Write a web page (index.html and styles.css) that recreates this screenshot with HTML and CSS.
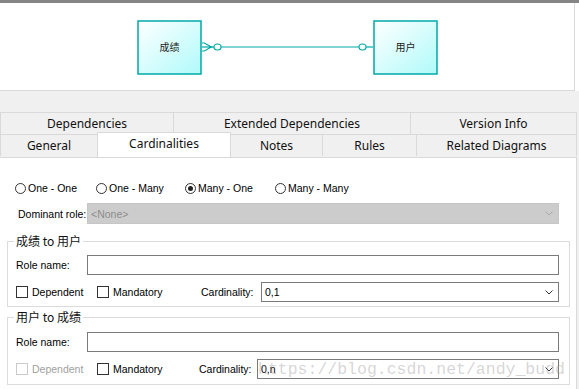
FILE: index.html
```html
<!DOCTYPE html>
<html lang="zh-CN">
<head>
    <meta charset="UTF-8">
    <title>Reference Properties</title>
    <link rel="stylesheet" href="styles.css">
</head>
<body>
    <!-- Diagram preview -->
    <div class="diagram-wrap">
        <div class="diagram">
            <svg width="574" height="87" viewBox="0 0 574 87">
                <defs>
                    <linearGradient id="entityFill" x1="0" y1="0" x2="1" y2="1">
                        <stop offset="0" stop-color="#ffffff"/>
                        <stop offset="1" stop-color="#b0fafa"/>
                    </linearGradient>
                </defs>
                <g fill="none" stroke="#00a9a9" stroke-width="1.2">
                    <line x1="221" y1="44" x2="359" y2="44"/>
                    <line x1="366" y1="44" x2="373" y2="44"/>
                    <polyline points="202,40 204.5,40 211,44 204.5,48 202,48"/>
                    <line x1="202" y1="44" x2="214" y2="44"/>
                    <ellipse cx="217.5" cy="44" rx="3.5" ry="3"/>
                    <ellipse cx="362.5" cy="44" rx="3.5" ry="3"/>
                </g>
                <path d="M209 42.6 L213 44 L209 45.4 Z" fill="#00a9a9"/>
                <rect class="entity" x="138" y="18" width="63" height="53"/>
                <rect class="entity" x="374" y="18" width="63" height="53"/>
                <text class="entity-name" x="169.5" y="47.5">成绩</text>
                <text class="entity-name" x="405.5" y="47.5">用户</text>
            </svg>
        </div>
    </div>

    <!-- Tabs -->
    <div class="tabs">
        <div class="tab-row">
            <div class="tab w-dep">Dependencies</div>
            <div class="tab w-ext">Extended Dependencies</div>
            <div class="tab w-ver">Version Info</div>
        </div>
        <div class="tab-row">
            <div class="tab w-gen">General</div>
            <div class="tab active w-card">Cardinalities</div>
            <div class="tab w-notes">Notes</div>
            <div class="tab w-rules">Rules</div>
            <div class="tab w-rel">Related Diagrams</div>
        </div>
    </div>

    <!-- Cardinalities page -->
    <div class="panel">
        <div class="choice-row">
            <label class="choice w1"><span class="radio"></span>One - One</label>
            <label class="choice w2"><span class="radio"></span>One - Many</label>
            <label class="choice w3"><span class="radio on"></span>Many - One</label>
            <label class="choice"><span class="radio"></span>Many - Many</label>
        </div>

        <div class="dominant-row">
            <span class="dominant-label">Dominant role:</span>
            <div class="select disabled">
                <span>&lt;None&gt;</span>
                <svg class="chev" width="8" height="5" viewBox="0 0 8 5"><polyline points="0.5,0.5 4,4 7.5,0.5"/></svg>
            </div>
        </div>

        <fieldset class="group">
            <legend>成绩 to 用户</legend>
            <div class="role-row">
                <span class="role-label">Role name:</span>
                <div class="text-input"></div>
            </div>
            <div class="check-row">
                <label class="check dep"><span class="box"></span>Dependent</label>
                <label class="check mand"><span class="box"></span>Mandatory</label>
                <span class="card-label">Cardinality:</span>
                <div class="select">
                    <span>0,1</span>
                    <svg class="chev" width="8" height="5" viewBox="0 0 8 5"><polyline points="0.5,0.5 4,4 7.5,0.5"/></svg>
                </div>
            </div>
        </fieldset>

        <fieldset class="group second">
            <legend>用户 to 成绩</legend>
            <div class="role-row">
                <span class="role-label">Role name:</span>
                <div class="text-input"></div>
            </div>
            <div class="check-row">
                <label class="check dep off"><span class="box"></span>Dependent</label>
                <label class="check mand"><span class="box"></span>Mandatory</label>
                <span class="card-label">Cardinality:</span>
                <div class="select">
                    <span>0,n</span>
                    <svg class="chev" width="8" height="5" viewBox="0 0 8 5"><polyline points="0.5,0.5 4,4 7.5,0.5"/></svg>
                </div>
            </div>
        </fieldset>

        <div class="watermark">https://blog.csdn.net/andy_budd</div>
    </div>
</body>
</html>
```

FILE: styles.css
```css
body { margin: 0; width: 579px; height: 389px; overflow: hidden; background: #f0f0f0; font-family: "Liberation Sans", Arial, sans-serif; font-size: 10.5px; color: #000; }

/* --- Diagram preview --- */
.diagram-wrap { background: #fff; border-top: 3px solid #858585; }
.diagram { width: 574px; height: 87px; border-right: 1px solid #dadada; border-bottom: 1px solid #dadada; }
.diagram svg { display: block; }
.entity { fill: url(#entityFill); stroke: #00a9a9; stroke-width: 1.5; }
.entity-name { font-family: "Noto Sans CJK SC", sans-serif; font-size: 10px; fill: #222; text-anchor: middle; }

/* --- Tabs --- */
.tabs { margin-top: 21px; font-family: "Noto Sans", "Noto Sans CJK SC", sans-serif; font-size: 12px; color: #111; }
.tab-row { display: flex; align-items: flex-start; }
.tab { box-sizing: border-box; height: 22px; line-height: 21px; text-align: center; background: #f0f0f0; border-top: 1px solid #d9d9d9; border-left: 1px solid #d9d9d9; }
.tab:last-child { border-right: 1px solid #d9d9d9; }
.tab.active { position: relative; z-index: 1; height: 25px; margin-top: -2px; background: #fff; border-right: 1px solid #d9d9d9; }
.tab.active + .tab { border-left: none; }
.w-dep { width: 173px; }
.w-ext { width: 237px; }
.w-ver { width: 167px; }
.w-gen { width: 97px; }
.w-card { width: 134px; }
.w-notes { width: 91px; }
.w-rules { width: 94px; }
.w-rel { width: 161px; }

/* --- Page body --- */
.panel { position: relative; box-sizing: border-box; width: 577px; height: 233px; background: #fff; border-top: 1px solid #d9d9d9; border-right: 1px solid #d9d9d9; }

.choice-row { display: flex; align-items: center; height: 14px; margin-top: 23px; padding-left: 15px; }
.choice { display: flex; align-items: center; white-space: nowrap; }
.choice.w1 { width: 81px; }
.choice.w2 { width: 89px; }
.choice.w3 { width: 90px; }
.radio { display: flex; align-items: center; justify-content: center; box-sizing: border-box; width: 11px; height: 11px; margin-right: 2px; border: 1px solid #333; border-radius: 50%; background: #fff; }
.radio.on::after { content: ""; width: 5px; height: 5px; border-radius: 50%; background: #222; }

.dominant-row { display: flex; align-items: center; height: 21px; margin-top: 8px; padding: 0 17px 0 18px; }
.dominant-label, .role-label, .card-label { flex-shrink: 0; white-space: nowrap; }
.dominant-label { width: 69px; }

.select { flex: 1; display: flex; align-items: center; justify-content: space-between; box-sizing: border-box; height: 20px; padding: 0 5px 0 3px; border: 1px solid #7a7a7a; background: #fff; }
.select.disabled { height: 21px; background: #cccccc; border-color: #c6c6c6; color: #8c8c8c; }
.chev polyline { fill: none; stroke: #333; stroke-width: 1; }
.select.disabled .chev polyline { stroke: #a8a8a8; }

.group { box-sizing: border-box; width: 563px; margin: 10px 0 0 7px; padding: 7px 10px 4px 8px; border: 1px solid #dcdcdc; min-width: 0; }
.group.second { margin-top: 3px; padding-top: 8px; padding-bottom: 5px; }
.group legend { margin-left: -2px; padding: 0 2px; font-family: "Noto Sans CJK SC", sans-serif; font-size: 12px; line-height: 14px; color: #111; }

.role-row { display: flex; align-items: center; height: 20px; }
.role-label { width: 71px; }
.text-input { flex: 1; box-sizing: border-box; height: 20px; border: 1px solid #7a7a7a; background: #fff; }

.check-row { display: flex; align-items: center; height: 20px; margin-top: 7px; }
.check { display: flex; align-items: center; flex-shrink: 0; white-space: nowrap; }
.check.dep { width: 81px; }
.check.mand { width: 104px; }
.card-label { width: 60px; }
.second .check.mand { width: 102px; }
.second .card-label { width: 58px; }
.box { box-sizing: border-box; width: 12px; height: 12px; margin-right: 4px; border: 1px solid #333; background: #fff; }
.check.off { color: #a0a0a0; }
.check.off .box { border-color: #cacaca; }

.watermark { position: absolute; left: 258px; top: 203px; font-family: "Liberation Mono", monospace; font-size: 16.5px; line-height: 18px; color: rgba(150, 150, 150, 0.4); white-space: nowrap; pointer-events: none; }
```
